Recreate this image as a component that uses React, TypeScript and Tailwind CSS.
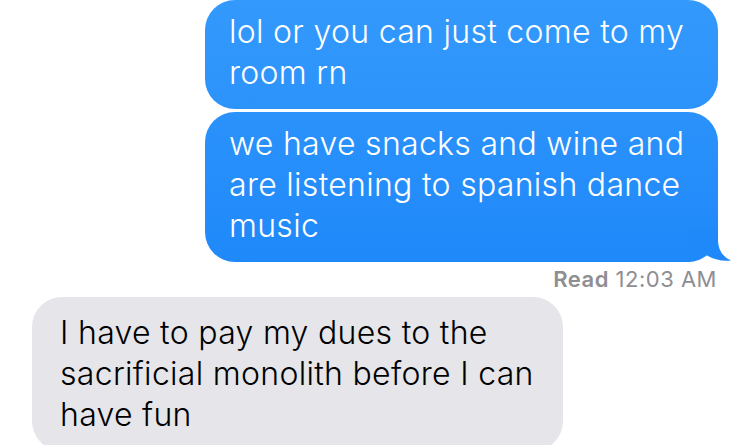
import React from 'react';

const font = { fontFamily: 'Inter, "Liberation Sans", sans-serif' };

type BubbleProps = {
  lines: string[];
  className?: string;
  tail?: boolean;
};

const SentBubble: React.FC<BubbleProps> = ({ lines, className = '', tail }) => (
  <div
    className={`relative w-[513px] rounded-[30px] pl-[24px] pr-4 pt-[11px] pb-[16px] text-[32px] leading-[41px] font-light tracking-[0.3px] text-white ${className}`}
  >
    {tail && (
      <svg
        className="absolute right-[-13px] bottom-0"
        width="43"
        height="33"
        viewBox="0 0 43 33"
      >
        <path
          d="M0 0 L30 0 L30 12 Q30.5 26 43 31.5 Q30 33 18 26 Q12 31 0 33 Z"
          fill="#1f89fa"
        />
      </svg>
    )}
    <div className="relative">
      {lines.map(l => (
        <span key={l} className="block whitespace-nowrap">
          {l}
        </span>
      ))}
    </div>
  </div>
);

export default function App() {
  return (
    <div className="w-[750px] h-[445px] overflow-hidden bg-white" style={font}>
      <div className="flex flex-col items-end pr-[32px]">
        <SentBubble
          className="bg-gradient-to-b from-[#3399fc] to-[#2c93fb]"
          lines={['lol or you can just come to my', 'room rn']}
        />
        <SentBubble
          className="mt-[3px] bg-gradient-to-b from-[#2b92fb] to-[#1f89fa]"
          lines={['we have snacks and wine and', 'are listening to spanish dance', 'music']}
          tail
        />
        <div className="mt-[4px] mr-[1px] text-[22px] leading-[26px] tracking-[0.5px] text-[#8e8e93]">
          <span className="font-semibold">Read</span> 12:03 AM
        </div>
      </div>
      <div className="pl-[32px] mt-[5px]">
        <div className="w-[531px] rounded-[30px] bg-[#e5e5ea] pl-[28px] pt-[15px] pb-[16px] text-[32px] leading-[41px] font-light tracking-[0.3px] text-black">
          <span className="block whitespace-nowrap">I have to pay my dues to the</span>
          <span className="block whitespace-nowrap">sacrificial monolith before I can</span>
          <span className="block whitespace-nowrap">have fun</span>
        </div>
      </div>
    </div>
  );
}
